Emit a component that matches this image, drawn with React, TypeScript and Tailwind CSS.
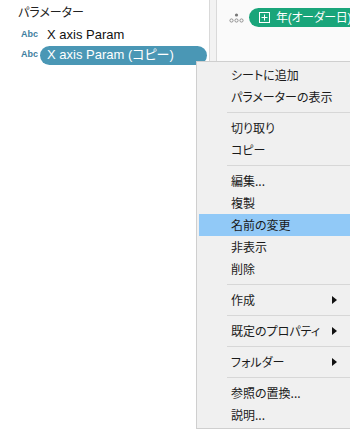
import { ReactNode } from "react";

const jp = "font-['Segoe_UI','Noto_Sans_CJK_JP',sans-serif] [font-feature-settings:'palt']";

function Item(props: { label: string; active?: boolean; sub?: boolean }) {
  return (
    <div
      className={
        "flex items-center h-[22px] pl-[32px] pr-[15px] text-[12px] text-[#1a1a1a] " +
        (props.active ? "bg-[#91c9f7]" : "")
      }
    >
      <span className="flex-1 leading-none">{props.label}</span>
      {props.sub && (
        <svg width="5" height="8" viewBox="0 0 5 8" className="mr-[1px]">
          <path d="M0 0 L5 4 L0 8 Z" fill="#111" />
        </svg>
      )}
    </div>
  );
}

function Sep() {
  return (
    <div className="h-[9px] flex items-center pl-[28px] pr-[2px]">
      <div className="h-px w-full bg-[#d7d7d7]" />
    </div>
  );
}

function Row(props: { children: ReactNode }) {
  return <div className="flex items-center h-[20px]">{props.children}</div>;
}

export default function App() {
  return (
    <div className={"relative w-[350px] h-[429px] overflow-hidden flex bg-white " + jp}>
      {/* left data pane */}
      <div className="w-[209px] shrink-0 bg-white pt-[3px]">
        <div className="pl-[18px] h-[18px] text-[12px] text-[#222] leading-[18px]">パラメーター</div>
        <div className="mt-[4px]">
          <Row>
            <span className="w-[47px] pl-[21px] text-[9px] font-bold text-[#3f7fa0] font-['Liberation_Sans',sans-serif]">
              Abc
            </span>
            <span className="text-[13px] text-[#111] font-['Liberation_Sans','Noto_Sans_CJK_JP',sans-serif]">
              X axis Param
            </span>
          </Row>
          <Row>
            <span className="w-[40px] pl-[21px] text-[9px] font-bold text-[#3f7fa0] font-['Liberation_Sans',sans-serif]">
              Abc
            </span>
            <span className="flex items-center h-[19px] w-[167px] rounded-full bg-[#4a97b5] pl-[7px] text-[13px] text-white font-['Liberation_Sans','Noto_Sans_CJK_JP',sans-serif]">
              X axis Param (コピー)
            </span>
          </Row>
        </div>
      </div>

      {/* splitter */}
      <div className="w-[8px] shrink-0 bg-[#f2f2f2] border-l border-r border-[#d9d9d9]" />

      {/* shelf area */}
      <div className="flex-1 min-w-0 overflow-hidden bg-[#fafafa] pt-[8px] pl-[12px]">
        <div className="flex items-center h-[19px]">
          <svg width="15" height="10" viewBox="0 0 15 10" className="mr-[5px] shrink-0">
            <circle cx="7.5" cy="2" r="1.6" fill="#777" />
            <circle cx="2.5" cy="7.5" r="1.6" fill="none" stroke="#888" strokeWidth="0.9" />
            <circle cx="7.5" cy="7.5" r="1.6" fill="none" stroke="#888" strokeWidth="0.9" />
            <circle cx="12.5" cy="7.5" r="1.6" fill="none" stroke="#888" strokeWidth="0.9" />
          </svg>
          <div className="flex items-center h-[19px] w-[120px] rounded-l-full bg-[#19a57a] pl-[10px] text-white text-[12px] shrink-0">
            <svg width="11" height="11" viewBox="0 0 11 11" className="mr-[6px] shrink-0">
              <rect x="0.5" y="0.5" width="10" height="10" fill="none" stroke="#fff" strokeWidth="1" />
              <path d="M5.5 2.5 V8.5 M2.5 5.5 H8.5" stroke="#fff" strokeWidth="1" />
            </svg>
            <span className="leading-none whitespace-nowrap tracking-[-0.3px] font-['Liberation_Sans','Noto_Sans_CJK_JP',sans-serif]">
              年(オーダー日)
            </span>
          </div>
        </div>
      </div>

      {/* context menu */}
      <div className="absolute left-[196px] top-[61px] w-[160px] h-[368px] bg-[#f0f0f0] border border-[#cfcfcf] p-[2px]">
        <Item label="シートに追加" />
        <Item label="パラメーターの表示" />
        <Sep />
        <Item label="切り取り" />
        <Item label="コピー" />
        <Sep />
        <Item label="編集..." />
        <Item label="複製" />
        <Item label="名前の変更" active />
        <Item label="非表示" />
        <Item label="削除" />
        <Sep />
        <Item label="作成" sub />
        <Sep />
        <Item label="既定のプロパティ" sub />
        <Sep />
        <Item label="フォルダー" sub />
        <Sep />
        <Item label="参照の置換..." />
        <Item label="説明..." />
      </div>
    </div>
  );
}
